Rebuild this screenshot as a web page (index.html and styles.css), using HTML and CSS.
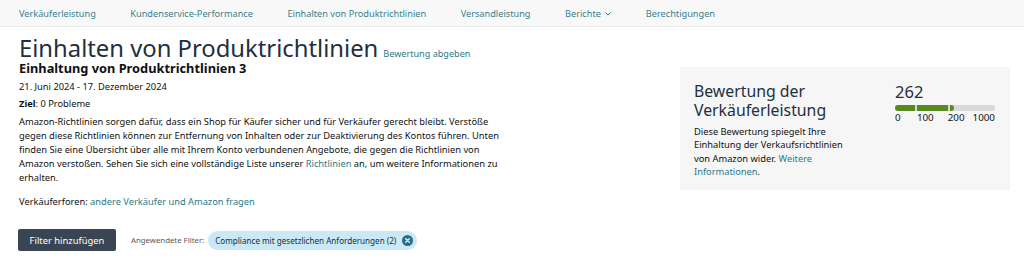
FILE: index.html
```html
<!DOCTYPE html>
<html lang="de">
<head>
  <meta charset="UTF-8">
  <meta name="viewport" content="width=device-width, initial-scale=1.0">
  <title>Einhalten von Produktrichtlinien</title>
  <link rel="stylesheet" href="styles.css">
</head>
<body>
  <nav class="topnav">
    <a href="#">Verkäuferleistung</a>
    <a href="#">Kundenservice-Performance</a>
    <a href="#">Einhalten von Produktrichtlinien</a>
    <a href="#">Versandleistung</a>
    <a href="#">Berichte <svg class="caret" width="6" height="4" viewBox="0 0 6 4"><path d="M0.5 0.5L3 3L5.5 0.5" fill="none" stroke="#3a7f8d" stroke-width="1"/></svg></a>
    <a href="#">Berechtigungen</a>
  </nav>

  <div class="page">
    <div class="title-row">
      <h1>Einhalten von Produktrichtlinien</h1>
      <a class="feedback" href="#">Bewertung abgeben</a>
    </div>

    <div class="content">
      <div class="main">
        <h2>Einhaltung von Produktrichtlinien 3</h2>
        <p class="dates">21. Juni 2024 - 17. Dezember 2024</p>
        <p class="goal"><b>Ziel</b>: 0 Probleme</p>
        <p class="intro">Amazon-Richtlinien sorgen dafür, dass ein Shop für Käufer sicher und für Verkäufer gerecht bleibt. Verstöße gegen diese Richtlinien können zur Entfernung von Inhalten oder zur Deaktivierung des Kontos führen. Unten finden Sie eine Übersicht über alle mit Ihrem Konto verbundenen Angebote, die gegen die Richtlinien von Amazon verstoßen. Sehen Sie sich eine vollständige Liste unserer <a href="#">Richtlinien</a> an, um weitere Informationen zu erhalten.</p>
        <p class="forum">Verkäuferforen: <a href="#">andere Verkäufer und Amazon fragen</a></p>
      </div>

      <aside class="score-card">
        <div class="score-text">
          <h3>Bewertung der Verkäuferleistung</h3>
          <p>Diese Bewertung spiegelt Ihre Einhaltung der Verkaufsrichtlinien von Amazon wider. <a href="#">Weitere Informationen</a>.</p>
        </div>
        <div class="score">
          <div class="score-value">262</div>
          <div class="bar">
            <span class="seg seg-a"></span>
            <span class="seg seg-b"></span>
            <span class="seg seg-c"></span>
          </div>
          <div class="bar-labels">
            <span>0</span><span>100</span><span>200</span><span>1000</span>
          </div>
        </div>
      </aside>
    </div>

    <div class="filters">
      <button class="btn-filter">Filter hinzufügen</button>
      <span class="applied-label">Angewendete Filter:</span>
      <span class="chip">Compliance mit gesetzlichen Anforderungen (2)
        <svg class="chip-x" width="11" height="11" viewBox="0 0 12 12"><circle cx="6" cy="6" r="6" fill="#2f6b82"/><path d="M4 4l4 4M8 4l-4 4" stroke="#c8e9f5" stroke-width="1.6" stroke-linecap="round"/></svg>
      </span>
    </div>
  </div>
</body>
</html>
```

FILE: styles.css
```css
body {
  margin: 0;
  font-family: "Noto Sans", Arial, sans-serif;
  color: #0f1111;
  background: #fff;
}
a {
  color: #2a7a8a;
  text-decoration: none;
}
.topnav {
  display: flex;
  height: 26px;
  align-items: center;
  padding-left: 19px;
  background: #f8f8f8;
  border-bottom: 1px solid #e8e8e8;
  font-size: 9.2px;
}
.topnav a {
  color: #3a7f8d;
  margin-right: 34.5px;
}
.caret {
  margin-left: 2px;
  vertical-align: 1px;
}
.page {
  padding: 0 14px 0 19px;
}
.title-row {
  display: flex;
  align-items: baseline;
  margin-top: 8px;
}
h1 {
  margin: 0;
  font-size: 23.8px;
  font-weight: 400;
  color: #232f3e;
  line-height: 26px;
}
.feedback {
  font-size: 9.1px;
  margin-left: 5px;
}
.content {
  display: flex;
  justify-content: space-between;
  align-items: flex-start;
}
.main {
  width: 484px;
}
h2 {
  margin: 0;
  font-size: 12.8px;
  font-weight: 700;
  line-height: 14px;
  color: #0f1111;
}
.main p {
  margin: 0;
  font-size: 9.3px;
  line-height: 14px;
}
.dates {
  padding-top: 5px;
}
.goal {
  padding-top: 3px;
}
.intro {
  padding-top: 4px;
}
.forum {
  padding-top: 10px;
}
.score-card {
  margin-top: 6px;
  width: 330px;
  height: 123px;
  box-sizing: border-box;
  padding: 15px 14px 0;
  background: #f6f6f6;
  display: flex;
}
.score-text {
  width: 201px;
}
h3 {
  margin: 0;
  font-size: 15.8px;
  font-weight: 400;
  line-height: 19px;
  color: #232f3e;
  width: 170px;
}
.score-text p {
  margin: 5px 0 0;
  font-size: 9.3px;
  line-height: 13.3px;
  width: 160px;
}
.score {
  width: 100px;
}
.score-value {
  font-size: 16.5px;
  line-height: 20px;
  color: #232f3e;
}
.bar {
  margin-top: 3px;
  display: flex;
  height: 6px;
  border-radius: 3px;
  background: #d7dada;
  overflow: hidden;
}
.seg {
  height: 6px;
  background: #5a8a1f;
  margin-right: 2px;
}
.seg-a {
  width: 20px;
}
.seg-b {
  width: 31px;
}
.seg-c {
  width: 4px;
  border-radius: 0 3px 3px 0;
}
.bar-labels {
  display: flex;
  font-size: 9.8px;
  line-height: 12px;
  margin-top: 1px;
}
.bar-labels span:nth-child(1) {
  width: 22px;
}
.bar-labels span:nth-child(2) {
  width: 31px;
}
.bar-labels span:nth-child(3) {
  width: 25px;
}
.filters {
  display: flex;
  align-items: center;
  margin-top: 20px;
}
.btn-filter {
  height: 22px;
  width: 98px;
  margin-left: -1px;
  padding: 0;
  border: none;
  border-radius: 2px;
  background: #3a4553;
  color: #fff;
  font-family: inherit;
  font-size: 9.4px;
}
.applied-label {
  margin-left: 15px;
  font-size: 7.8px;
  color: #565959;
}
.chip {
  margin-left: 4px;
  display: inline-flex;
  align-items: center;
  height: 19px;
  padding: 0 4px 0 7px;
  border-radius: 10px;
  background: #c8e9f5;
  font-size: 8.1px;
  color: #16323d;
}
.chip-x {
  margin-left: 6px;
}
```
